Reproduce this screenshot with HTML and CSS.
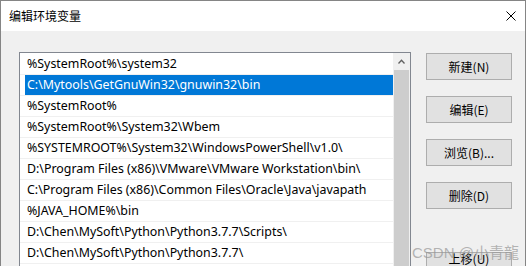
FILE: index.html
```html
<!DOCTYPE html>
<html lang="zh-CN">
<head>
    <meta charset="UTF-8">
    <meta name="viewport" content="width=device-width, initial-scale=1.0">
    <title>编辑环境变量</title>
    <link rel="stylesheet" href="styles.css">
</head>
<body>
    <div class="dialog">
        <div class="title-bar">
            <span class="title">编辑环境变量</span>
            <svg class="close" width="10" height="10" viewBox="0 0 10 10">
                <path d="M0.5 0.5 L9.5 9.5 M9.5 0.5 L0.5 9.5" stroke="#000" stroke-width="1" fill="none"/>
            </svg>
        </div>

        <div class="dialog-body">
            <div class="path-list">
                <div class="rows">
                    <div class="row"><span class="label">%SystemRoot%\system32</span></div>
                    <div class="row selected"><span class="label">C:\Mytools\GetGnuWin32\gnuwin32\bin</span></div>
                    <div class="row"><span class="label">%SystemRoot%</span></div>
                    <div class="row"><span class="label">%SystemRoot%\System32\Wbem</span></div>
                    <div class="row"><span class="label">%SYSTEMROOT%\System32\WindowsPowerShell\v1.0\</span></div>
                    <div class="row"><span class="label">D:\Program Files (x86)\VMware\VMware Workstation\bin\</span></div>
                    <div class="row"><span class="label">C:\Program Files (x86)\Common Files\Oracle\Java\javapath</span></div>
                    <div class="row"><span class="label">%JAVA_HOME%\bin</span></div>
                    <div class="row"><span class="label">D:\Chen\MySoft\Python\Python3.7.7\Scripts\</span></div>
                    <div class="row"><span class="label">D:\Chen\MySoft\Python\Python3.7.7\</span></div>
                </div>
                <div class="scrollbar">
                    <div class="arrow-up">
                        <svg width="7" height="5" viewBox="0 0 7 5">
                            <path d="M0.5 4.5 L3.5 1.2 L6.5 4.5" stroke="#606060" stroke-width="1.3" fill="none"/>
                        </svg>
                    </div>
                    <div class="thumb"></div>
                </div>
            </div>

            <div class="buttons">
                <button class="btn">新建(N)</button>
                <button class="btn">编辑(E)</button>
                <button class="btn">浏览(B)...</button>
                <button class="btn">删除(D)</button>
                <button class="btn btn-move">上移(U)</button>
            </div>
        </div>

        <div class="watermark">CSDN @小青龍</div>
    </div>
</body>
</html>
```

FILE: styles.css
```css
:root {
    --border: #858585;
    --face: #f0f0f0;
    --btn: #e1e1e1;
    --btn-border: #adadad;
    --select: #0078d7;
}

* {
    margin: 0;
    padding: 0;
    box-sizing: border-box;
}

body {
    background: #fff;
    font-family: "Noto Sans", "Noto Sans CJK SC", sans-serif;
    font-size: 12px;
    color: #000;
}

.dialog {
    position: relative;
    width: 526px;
    height: 266px;
    overflow: hidden;
    border: 1px solid var(--border);
    border-bottom: none;
    display: flex;
    flex-direction: column;
}

.title-bar {
    height: 30px;
    flex-shrink: 0;
    background: #fff;
    display: flex;
    align-items: center;
    justify-content: space-between;
    padding: 0 9px 1px 8px;
}

.title {
    font-family: "Noto Sans CJK SC", sans-serif;
    font-size: 12px;
    line-height: 14px;
}

.close {
    display: block;
}

.dialog-body {
    flex: 1;
    background: var(--face);
    display: flex;
    align-items: flex-start;
    padding: 21px 0 0 18px;
    gap: 15px;
}

.path-list {
    width: 392px;
    height: 260px;
    flex-shrink: 0;
    background: #fff;
    border: 1px solid #828790;
    display: flex;
}

.rows {
    flex: 1;
    padding-top: 1px;
}

.row {
    height: 21px;
    border-bottom: 1px solid #f0f0f0;
    display: flex;
    white-space: nowrap;
    overflow: hidden;
}

.label {
    flex: 1;
    margin-left: 5px;
    padding-left: 2px;
    font-size: 12.4px;
    line-height: 20px;
}

.row.selected .label {
    background: var(--select);
    color: #fff;
}

.scrollbar {
    width: 17px;
    flex-shrink: 0;
    background: var(--face);
    display: flex;
    flex-direction: column;
}

.arrow-up {
    height: 17px;
    display: flex;
    align-items: center;
    justify-content: center;
}

.arrow-up svg {
    display: block;
}

.thumb {
    flex: 1;
    margin: 0 1px;
    background: #cdcdcd;
}

.buttons {
    display: flex;
    flex-direction: column;
    gap: 16px;
    padding-top: 1px;
}

.btn {
    width: 86px;
    height: 27px;
    background: var(--btn);
    border: 1px solid var(--btn-border);
    font-family: "Noto Sans CJK SC", sans-serif;
    font-size: 12px;
    color: #000;
    line-height: 25px;
}

.btn-move {
    margin-top: 27px;
    line-height: 12px;
    padding-bottom: 13px;
}

.watermark {
    position: absolute;
    left: 411px;
    top: 240px;
    font-family: "Liberation Sans", "Noto Sans CJK SC", sans-serif;
    font-size: 15px;
    color: rgba(150, 150, 150, 0.7);
    white-space: nowrap;
}
```
